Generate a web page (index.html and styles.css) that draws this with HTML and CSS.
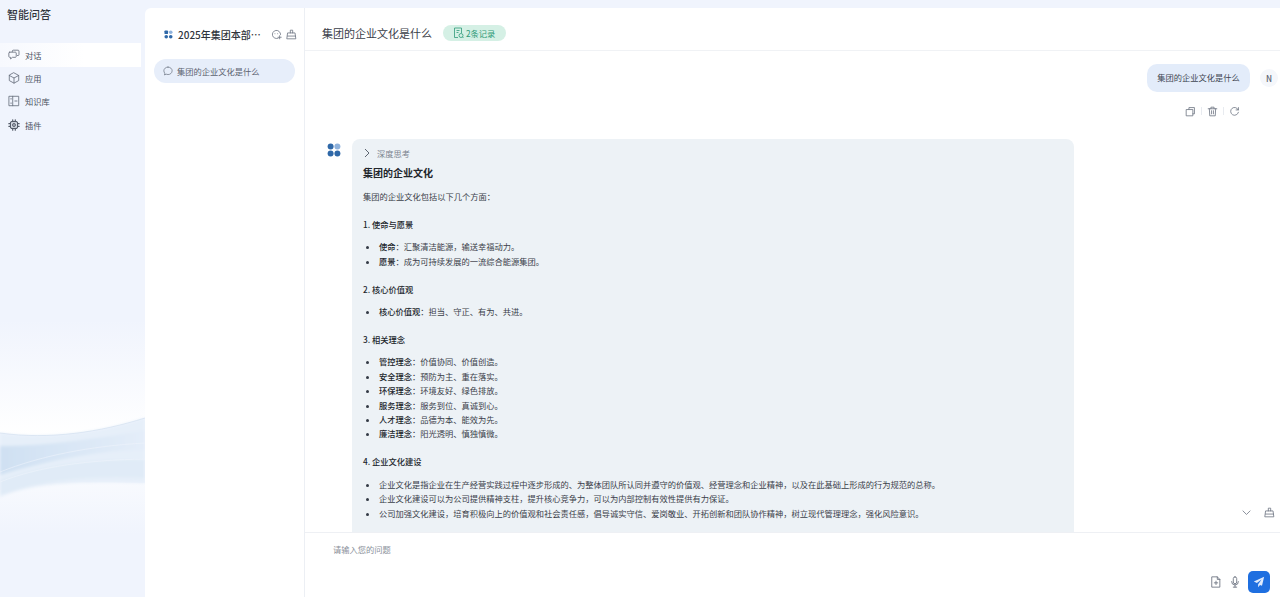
FILE: index.html
```html
<!DOCTYPE html>
<html lang="zh-CN">
<head>
<meta charset="utf-8">
<title>智能问答</title>
<link rel="stylesheet" href="styles.css">
</head>
<body>
<div class="app">
  <aside class="side">
    <svg class="wave" viewBox="0 0 145 240" aria-hidden="true">
      <defs>
        <linearGradient id="glow" x1="0" y1="0" x2="0" y2="1">
          <stop offset="0" stop-color="#f0f4fd"/>
          <stop offset="1" stop-color="#ffffff"/>
        </linearGradient>
        <linearGradient id="low" x1="0" y1="0" x2="0" y2="1">
          <stop offset="0" stop-color="#f8fafe"/>
          <stop offset="1" stop-color="#f0f4fd"/>
        </linearGradient>
        <linearGradient id="band" x1="0" y1="0" x2="1" y2="0">
          <stop offset="0" stop-color="#cfe0f2"/>
          <stop offset="1" stop-color="#e4edf9"/>
        </linearGradient>
        <filter id="soft" x="-5%" y="-20%" width="110%" height="140%"><feGaussianBlur stdDeviation="1.500"/></filter>
      </defs>
      <path d="M0 20H145V118C100 132 50 140 0 133Z" fill="url(#glow)"/>
      <path d="M0 190C40 180 100 182 145 183V235H0Z" fill="url(#low)"/>
      <g filter="url(#soft)">
        <path d="M0 133C50 140 100 132 145 118V183C100 182 40 180 0 197Z" fill="#e6eff9"/>
        <path d="M0 146C50 146 100 138 145 130V150C100 150 50 160 0 175Z" fill="url(#band)"/>
        <path d="M0 180C40 165 90 158 145 160V178C100 176 50 178 10 192L0 195Z" fill="#e0ebf7"/>
      </g>
      <path d="M0 133C50 140 100 132 145 118" fill="none" stroke="#c9d9eb" stroke-width=".5"/>
      <path d="M0 172C40 156 90 146 145 143" fill="none" stroke="#eef4fb" stroke-width=".6"/>
      <path d="M0 182C40 166 90 160 145 159" fill="none" stroke="#eef4fb" stroke-width=".6"/>
    </svg>
    <h1 class="brand">智能问答</h1>
    <nav class="nav">
      <a class="nav-item is-active">
        <svg class="ico" viewBox="0 0 14 14"><path d="M5 3.200V2.400c0-.6.5-1 1-1h5.800c.6 0 1 .4 1 1v4.200c0 .6-.4 1-1 1h-.8M2 3.700h6.600c.6 0 1 .4 1 1v4c0 .6-.4 1-1 1H5.200L3 11.600V9.700H2c-.6 0-1-.4-1-1v-4c0-.6.4-1 1-1Z"/></svg>
        <span>对话</span>
      </a>
      <a class="nav-item">
        <svg class="ico" viewBox="0 0 14 14"><path d="M7 1 12.500 4v6L7 13 1.500 10V4ZM1.500 4 7 7l5.500-3M7 7v6"/></svg>
        <span>应用</span>
      </a>
      <a class="nav-item">
        <svg class="ico" viewBox="0 0 14 14"><path d="M1.500 1.500h11v11h-11ZM5.500 1.500v11M8 7h2.500M3.200 4.500h.8M3.200 9.500h.8"/></svg>
        <span>知识库</span>
      </a>
      <a class="nav-item">
        <svg class="ico ico-chip" viewBox="0 0 14 14"><path d="M4 3h6l1 1v6l-1 1H4l-1-1V4ZM5.500 1v2M8.500 1v2M5.500 11v2M8.500 11v2M1 5.500h2M1 8.500h2M11 5.500h2M11 8.500h2"/><circle cx="7" cy="7" r="1.600"/></svg>
        <span>插件</span>
      </a>
    </nav>
  </aside>

  <section class="panel">
    <div class="panel-head">
      <svg class="logo-sm" viewBox="0 0 10 10"><rect x="0.500" y="0.500" width="4" height="4" rx="1" fill="#2f68a8"/><rect x="5.500" y="0.500" width="4" height="4" rx="2" fill="#8fb2dc"/><rect x="0.500" y="5.500" width="4" height="4" rx="2" fill="#2f68a8"/><rect x="5.500" y="5.500" width="4" height="4" rx="2" fill="#2f68a8"/></svg>
      <span class="panel-title">2025年集团本部…</span>
      <svg class="ico ico-sm" viewBox="0 0 14 14"><path d="M12.200 7a5.200 5.200 0 1 0-3 4.700M5 6h.01M8.500 6h.01M9 10.500h4M11 8.500v4"/></svg>
      <svg class="ico ico-sm" viewBox="0 0 14 14"><path d="M5.500 5V1.500h3V5M2.500 5h9l1 7.500h-11ZM2 9h10"/></svg>
    </div>
    <div class="session">
      <svg class="ico ico-chat" viewBox="0 0 14 14"><path d="M7 1.500c3.200 0 5.800 2.300 5.800 5.200S10.200 12 7 12c-.9 0-1.700-.2-2.500-.5L2 12.500l.6-2.400C1.700 9.200 1.200 8 1.200 6.700 1.200 3.800 3.800 1.500 7 1.500Z"/></svg>
      <span>集团的企业文化是什么</span>
    </div>
  </section>

  <main class="main">
    <header class="top">
      <h2 class="top-title">集团的企业文化是什么</h2>
      <span class="tag">
        <svg class="tag-ico" viewBox="0 0 12 12"><path d="M8.500 6V1h-7v9.500h3.500M3.500 3.500h3M3.500 5.500h2"/><circle cx="8" cy="8.500" r="2"/><path d="m9.500 10 1 1"/></svg>
        2条记录
      </span>
    </header>

    <div class="scroll">
      <div class="user-row">
        <div class="bubble">集团的企业文化是什么</div>
        <div class="avatar">N</div>
      </div>
      <div class="actions">
        <svg class="ico" viewBox="0 0 14 14"><path d="M5 4V2h7v8h-2M2 4.500h8v8H2Z"/></svg>
        <i class="sep"></i>
        <svg class="ico" viewBox="0 0 14 14"><path d="M1.500 3.500h11M5 3.500V1.500h4v2M3 3.500l.5 9h7l.5-9M5.800 6v4M8.200 6v4"/></svg>
        <i class="sep"></i>
        <svg class="ico" viewBox="0 0 14 14"><path d="M11.800 5A5 5 0 1 0 12 8M12 2v3H9"/></svg>
      </div>

      <div class="answer">
        <svg class="logo" viewBox="0 0 14 14"><circle cx="3.600" cy="3.600" r="3" fill="#2f68a8"/><circle cx="10.400" cy="3.600" r="3" fill="#8fb2dc"/><circle cx="3.600" cy="10.400" r="3" fill="#2f68a8"/><circle cx="10.400" cy="10.400" r="3" fill="#2f68a8"/></svg>
        <article class="card">
          <div class="think">
            <svg class="chev" viewBox="0 0 8 10"><path d="m2 1 4 4-4 4"/></svg>
            <span>深度思考</span>
          </div>
          <h3 class="card-title">集团的企业文化</h3>
          <p class="para">集团的企业文化包括以下几个方面：</p>
          <h4 class="sub">1. 使命与愿景</h4>
          <ul class="list">
            <li><b>使命</b>：汇聚清洁能源，输送幸福动力。</li>
            <li><b>愿景</b>：成为可持续发展的一流综合能源集团。</li>
          </ul>
          <h4 class="sub">2. 核心价值观</h4>
          <ul class="list">
            <li><b>核心价值观</b>：担当、守正、有为、共进。</li>
          </ul>
          <h4 class="sub">3. 相关理念</h4>
          <ul class="list">
            <li><b>管控理念</b>：价值协同、价值创造。</li>
            <li><b>安全理念</b>：预防为主、重在落实。</li>
            <li><b>环保理念</b>：环境友好、绿色排放。</li>
            <li><b>服务理念</b>：服务到位、真诚到心。</li>
            <li><b>人才理念</b>：品德为本、能效为先。</li>
            <li><b>廉洁理念</b>：阳光透明、慎独慎微。</li>
          </ul>
          <h4 class="sub">4. 企业文化建设</h4>
          <ul class="list">
            <li>企业文化是指企业在生产经营实践过程中逐步形成的、为整体团队所认同并遵守的价值观、经营理念和企业精神，以及在此基础上形成的行为规范的总称。</li>
            <li>企业文化建设可以为公司提供精神支柱，提升核心竞争力，可以为内部控制有效性提供有力保证。</li>
            <li>公司加强文化建设，培育积极向上的价值观和社会责任感，倡导诚实守信、爱岗敬业、开拓创新和团队协作精神，树立现代管理理念，强化风险意识。</li>
          </ul>
        </article>
      </div>

      <div class="float-tools">
        <svg class="ico" viewBox="0 0 14 14"><path d="m2.500 5 4.500 4.500L11.500 5"/></svg>
        <svg class="ico" viewBox="0 0 14 14"><path d="M5.500 5V1.500h3V5M2.500 5h9l1 7.500h-11ZM2 9h10"/></svg>
      </div>
    </div>

    <footer class="composer">
      <div class="placeholder">请输入您的问题</div>
      <div class="composer-tools">
        <svg class="ico" viewBox="0 0 14 14"><path d="M2.500 1h6l3 3v9h-9ZM8.500 1v3h3M7 6v4M5 8h4"/></svg>
        <svg class="ico" viewBox="0 0 14 14"><path d="M7 1a2 2 0 0 1 2 2v4a2 2 0 0 1-4 0V3a2 2 0 0 1 2-2ZM3 6.500a4 4 0 0 0 8 0M7 10.500V13M5 13h4"/></svg>
        <button class="send" type="button" aria-label="发送">
          <svg viewBox="0 0 14 14"><path d="M13 1 1 6.500l3.500 1.800L10 4 6 9.500V13l2.200-2.600 2.300 1.100Z" fill="#dfeafc"/></svg>
        </button>
      </div>
    </footer>
  </main>
</div>
</body>
</html>
```
FILE: styles.css
```css
* { box-sizing: border-box; }
html, body { height: 100%; margin: 0; }
body {
  overflow: hidden;
  background: #f0f4fd;
  color: #333a45;
  font-family: "Noto Sans CJK SC", "Noto Sans", sans-serif;
  font-size: 8.25px;
}
.app { display: flex; height: 597px; }

/* left navigation */
.side { position: relative; flex: 0 0 145px; overflow: hidden; }
.wave { position: absolute; left: 0; top: 300px; width: 145px; height: 240px; }
.brand {
  position: relative;
  margin: 0;
  padding: 4px 0 0 7px;
  height: 43px;
  font-size: 11px;
  font-weight: 500;
  line-height: 20px;
  color: #30343c;
}
.nav { position: relative; display: flex; flex-direction: column; }
.nav-item {
  display: flex;
  align-items: center;
  gap: 5px;
  height: 23.400px;
  padding-left: 8px;
  color: #4a5160;
}
.nav-item.is-active {
  background: linear-gradient(90deg, #f7f9fe, #ffffff 60%);
  width: 141px;
  height: 24px;
  margin-bottom: -.6px;
}
.ico {
  flex: none;
  width: 12px;
  height: 12px;
  fill: none;
  stroke: #6a7280;
  stroke-width: 1;
  stroke-linejoin: round;
  stroke-linecap: round;
}
.ico-chip { stroke: #555c69; stroke-width: 1.400; }

/* conversation list */
.panel {
  flex: 0 0 160px;
  margin-top: 8px;
  padding: 0 9px;
  background: #fff;
  border-right: 1px solid #eceff4;
  border-radius: 6px 0 0 0;
}
.panel-head { display: flex; align-items: center; height: 43px; margin-right: -2px; padding-left: 10px; padding-top: 10px; }
.logo-sm { width: 9px; height: 9px; margin-right: 5px; flex: none; }
.panel-title {
  flex: 1;
  font-size: 10px;
  font-weight: 500;
  color: #30343c;
  white-space: nowrap;
}
.ico-sm { width: 11px; height: 11px; margin-left: 4px; }
.session {
  display: flex;
  align-items: center;
  gap: 4px;
  height: 24px;
  margin-top: 8px;
  padding-left: 9px;
  border-radius: 12px;
  background: #e7eefa;
  color: #5b6270;
}
.ico-chat { width: 10px; height: 10px; }

/* main column */
.main { flex: 1; min-width: 0; display: flex; flex-direction: column; margin-top: 8px; background: #fff; }
.top {
  flex: none;
  display: flex;
  align-items: center;
  gap: 11px;
  height: 43px;
  padding: 8px 0 0 17px;
  border-bottom: 1px solid #f0f2f5;
}
.top-title { margin: 0; font-size: 11px; font-weight: 400; color: #3a4049; }
.tag {
  display: inline-flex;
  align-items: center;
  gap: 1px;
  height: 16px;
  padding: 0 11px 0 10px;
  border-radius: 8px;
  background: #d5f0e5;
  color: #2f9a78;
  font-size: 8.25px;
}
.tag-ico { width: 12px; height: 12px; fill: none; stroke: #2f9a78; stroke-width: .8; }

.scroll { position: relative; flex: 1; min-height: 0; overflow: hidden; }
.user-row { display: flex; justify-content: flex-end; align-items: center; gap: 10px; padding: 13px 2px 0 0; }
.bubble {
  width: 103px;
  height: 28px;
  border-radius: 10px;
  background: #e3ecfa;
  text-align: center;
  line-height: 26px;
  color: #3f4652;
}
.avatar {
  width: 18px;
  height: 18px;
  border-radius: 50%;
  background: #f5f7fb;
  text-align: center;
  line-height: 18px;
  font-weight: 500;
  color: #5a6270;
}
.actions { display: flex; justify-content: flex-end; align-items: center; gap: 5px; height: 12px; margin-top: 13px; padding-right: 40px; }
.actions .ico { width: 11px; height: 11px; }
.sep { width: 1px; height: 8px; background: #e8ebf0; }

.answer { display: flex; gap: 11px; margin-top: 22px; padding-left: 22px; }
.logo { flex: none; width: 14px; height: 14px; margin-top: 4px; }
.card {
  width: 722px;
  flex: none;
  padding: 7px 11px 20px;
  border-radius: 8px;
  background: #edf2f6;
  color: #3a4049;
  line-height: 14.4px;
}
.think { display: flex; align-items: center; gap: 6px; height: 14px; color: #7b838f; }
.chev { width: 8px; height: 10px; fill: none; stroke: #5e6672; stroke-width: 1; }
.card-title { margin: 5px 0 0; font-size: 10px; font-weight: 700; line-height: 16px; color: #22262c; }
.para { margin: 8px 0 13.500px; }
.sub { margin: 0 0 8px; font-size: 8.25px; font-weight: 500; color: #22262c; }
.list { margin: 0 0 13.500px; padding: 0 0 0 16px; }
.list li { white-space: nowrap; }
.list li::marker { color: #333a45; }
.list b { font-weight: 500; color: #22262c; }

.float-tools { position: absolute; right: 5px; top: 456px; display: flex; gap: 12px; }
.float-tools .ico { width: 11px; height: 11px; }

/* input */
.composer { position: relative; flex: none; height: 65px; padding: 10px 28px; border-top: 1px solid #eef0f4; background: #fff; }
.placeholder { color: #8a909a; line-height: 12px; }
.composer-tools { position: absolute; right: 10px; bottom: 4px; display: flex; align-items: center; gap: 7px; }
.send {
  display: flex;
  align-items: center;
  justify-content: center;
  width: 22px;
  height: 22px;
  padding: 0;
  border: 0;
  border-radius: 5px;
  background: #1f6fe0;
}
.send svg { width: 12px; height: 12px; }
```
